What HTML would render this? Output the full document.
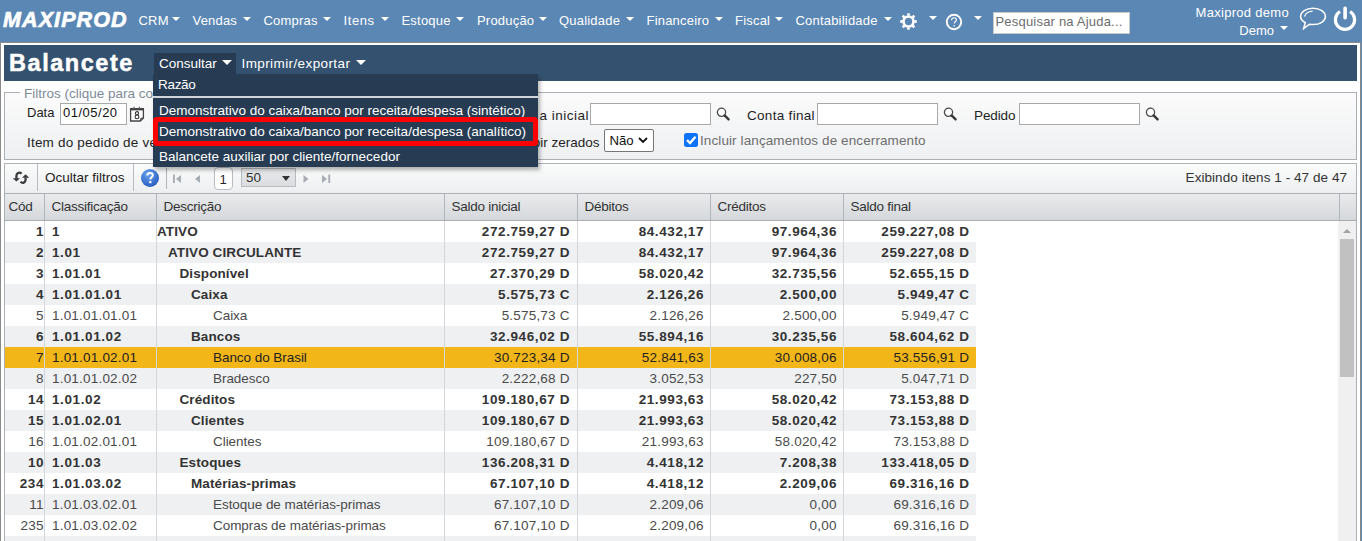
<!DOCTYPE html>
<html><head><meta charset="utf-8"><style>
html,body{margin:0;padding:0;}
body{width:1362px;height:541px;overflow:hidden;position:relative;background:#5b87b4;font-family:"Liberation Sans", sans-serif;}
.t{position:absolute;white-space:nowrap;line-height:16px;font-family:"Liberation Sans", sans-serif;}
.b{position:absolute;}
.tri{position:absolute;width:0;height:0;}
</style></head><body>
<div class="b" style="left:0px;top:0px;width:1362px;height:42px;background:#5b87b4"></div>
<div class="t" style="left:3px;top:11.68px;font-size:21.5px;color:#fff;font-weight:bold;letter-spacing:0px;font-style:italic;letter-spacing:1.1px;-webkit-text-stroke:0.7px #fff">MAXIPROD</div>
<div class="t" style="left:138.5px;top:12.95px;font-size:13px;color:#fff;font-weight:normal;letter-spacing:0.2px;">CRM</div>
<div class="tri" style="left:172px;top:16.5px;border-left:4.5px solid transparent;border-right:4.5px solid transparent;border-top:4.5px solid #fff"></div>
<div class="t" style="left:192.5px;top:12.95px;font-size:13px;color:#fff;font-weight:normal;letter-spacing:0.2px;">Vendas</div>
<div class="tri" style="left:243px;top:16.5px;border-left:4.5px solid transparent;border-right:4.5px solid transparent;border-top:4.5px solid #fff"></div>
<div class="t" style="left:263.5px;top:12.95px;font-size:13px;color:#fff;font-weight:normal;letter-spacing:0.2px;">Compras</div>
<div class="tri" style="left:322.5px;top:16.5px;border-left:4.5px solid transparent;border-right:4.5px solid transparent;border-top:4.5px solid #fff"></div>
<div class="t" style="left:343.5px;top:12.95px;font-size:13px;color:#fff;font-weight:normal;letter-spacing:0.6px;">Itens</div>
<div class="tri" style="left:381px;top:16.5px;border-left:4.5px solid transparent;border-right:4.5px solid transparent;border-top:4.5px solid #fff"></div>
<div class="t" style="left:401.5px;top:12.95px;font-size:13px;color:#fff;font-weight:normal;letter-spacing:0.2px;">Estoque</div>
<div class="tri" style="left:456px;top:16.5px;border-left:4.5px solid transparent;border-right:4.5px solid transparent;border-top:4.5px solid #fff"></div>
<div class="t" style="left:477.0px;top:12.95px;font-size:13px;color:#fff;font-weight:normal;letter-spacing:0.2px;">Produção</div>
<div class="tri" style="left:539px;top:16.5px;border-left:4.5px solid transparent;border-right:4.5px solid transparent;border-top:4.5px solid #fff"></div>
<div class="t" style="left:559.0px;top:12.95px;font-size:13px;color:#fff;font-weight:normal;letter-spacing:0.2px;">Qualidade</div>
<div class="tri" style="left:626px;top:16.5px;border-left:4.5px solid transparent;border-right:4.5px solid transparent;border-top:4.5px solid #fff"></div>
<div class="t" style="left:646.5px;top:12.95px;font-size:13px;color:#fff;font-weight:normal;letter-spacing:0.2px;">Financeiro</div>
<div class="tri" style="left:714.5px;top:16.5px;border-left:4.5px solid transparent;border-right:4.5px solid transparent;border-top:4.5px solid #fff"></div>
<div class="t" style="left:735.0px;top:12.95px;font-size:13px;color:#fff;font-weight:normal;letter-spacing:0.2px;">Fiscal</div>
<div class="tri" style="left:774.5px;top:16.5px;border-left:4.5px solid transparent;border-right:4.5px solid transparent;border-top:4.5px solid #fff"></div>
<div class="t" style="left:795.5px;top:12.95px;font-size:13px;color:#fff;font-weight:normal;letter-spacing:0.2px;">Contabilidade</div>
<div class="tri" style="left:883.5px;top:16.5px;border-left:4.5px solid transparent;border-right:4.5px solid transparent;border-top:4.5px solid #fff"></div>
<svg class="b" style="left:899px;top:12px" width="19" height="19" viewBox="0 0 19 19"><g fill="#fff">
<circle cx="9.5" cy="9.5" r="6.3"/>
<path d="M8.3 1.2 L10.7 1.2 L10.9 3.5 L8.1 3.5 Z M8.1 15.5 L10.9 15.5 L10.7 17.8 L8.3 17.8 Z"/>
<path d="M8.3 1.2 L10.7 1.2 L10.9 3.5 L8.1 3.5 Z M8.1 15.5 L10.9 15.5 L10.7 17.8 L8.3 17.8 Z" transform="rotate(45 9.5 9.5)"/>
<path d="M8.3 1.2 L10.7 1.2 L10.9 3.5 L8.1 3.5 Z M8.1 15.5 L10.9 15.5 L10.7 17.8 L8.3 17.8 Z" transform="rotate(90 9.5 9.5)"/>
<path d="M8.3 1.2 L10.7 1.2 L10.9 3.5 L8.1 3.5 Z M8.1 15.5 L10.9 15.5 L10.7 17.8 L8.3 17.8 Z" transform="rotate(135 9.5 9.5)"/>
</g><circle cx="9.5" cy="9.5" r="3.7" fill="#5b87b4"/></svg>
<div class="tri" style="left:928.5px;top:16px;border-left:4.5px solid transparent;border-right:4.5px solid transparent;border-top:4.5px solid #fff"></div>
<svg class="b" style="left:945px;top:13px" width="18" height="18" viewBox="0 0 18 18">
<circle cx="9" cy="9" r="7.2" fill="none" stroke="#fff" stroke-width="1.9"/>
<path d="M6.6 7.2 C6.6 5.6 7.7 4.8 9 4.8 C10.4 4.8 11.4 5.7 11.4 6.9 C11.4 8.4 9.2 8.7 9.2 10.6" fill="none" stroke="#fff" stroke-width="1.1"/>
<rect x="8.6" y="12.2" width="1.2" height="1.4" fill="#fff"/></svg>
<div class="tri" style="left:974px;top:16px;border-left:4.5px solid transparent;border-right:4.5px solid transparent;border-top:4.5px solid #fff"></div>
<div class="b" style="left:993px;top:12px;width:137px;height:22px;background:#fff;box-sizing:border-box;border:1px solid #c9c9c9"></div>
<div class="t" style="left:995.5px;top:14.05px;font-size:13px;color:#6d6d6d;font-weight:normal;letter-spacing:0.2px;">Pesquisar na Ajuda...</div>
<div class="t" style="right:73px;top:4.95px;font-size:13px;color:#fff;font-weight:normal;letter-spacing:0.3px;">Maxiprod demo</div>
<div class="t" style="right:88px;top:22.95px;font-size:13px;color:#fff;font-weight:normal;letter-spacing:0px;">Demo</div>
<div class="tri" style="left:1280px;top:26px;border-left:4.5px solid transparent;border-right:4.5px solid transparent;border-top:4.5px solid #fff"></div>
<svg class="b" style="left:1299px;top:6px" width="28" height="24" viewBox="0 0 28 24">
<path d="M14 2.2 C21 2.2 26.4 5.9 26.4 10.5 C26.4 15.1 21 18.6 14 18.6 C12.8 18.6 11.6 18.5 10.5 18.2 L4.6 22.6 L6.3 16.6 C3.3 15.1 1.6 12.9 1.6 10.5 C1.6 5.9 7 2.2 14 2.2 Z" fill="none" stroke="#fff" stroke-width="1.5"/>
<path d="M5.6 10.6 C6.2 7.6 9 5.6 13.6 5.1" fill="none" stroke="#fff" stroke-width="1.2"/></svg>
<svg class="b" style="left:1333px;top:6px" width="24" height="26" viewBox="0 0 24 26">
<path d="M7 5.5 A9.6 9.6 0 1 0 17 5.5" fill="none" stroke="#fff" stroke-width="3.2"/>
<rect x="10.3" y="0.6" width="3.6" height="13" rx="1.8" fill="#fff"/></svg>
<div class="b" style="left:0px;top:42px;width:1361px;height:499px;background:#fff;box-sizing:border-box;border:1px solid #8a8a8a;border-bottom:none"></div>
<div class="b" style="left:4px;top:45px;width:1353px;height:36px;background:#34526f"></div>
<div class="t" style="left:9px;top:55.18px;font-size:23.5px;color:#fff;font-weight:bold;letter-spacing:1.55px;-webkit-text-stroke:0.5px #fff">Balancete</div>
<div class="t" style="left:241.5px;top:55.77px;font-size:13.5px;color:#fff;font-weight:normal;letter-spacing:0.4px;">Imprimir/exportar</div>
<div class="tri" style="left:356px;top:60px;border-left:5.0px solid transparent;border-right:5.0px solid transparent;border-top:5px solid #fff"></div>
<div class="b" style="left:4px;top:92px;width:1353px;height:68px;box-sizing:border-box;border:1px solid #aab0b6;background:linear-gradient(#fbfbfb,#eef0f2)"></div>
<div class="b" style="left:20px;top:88px;width:136px;height:8px;background:#fff"></div>
<div class="t" style="left:24px;top:85.98px;font-size:13.5px;color:#7d8b99;font-weight:normal;letter-spacing:0px;background:linear-gradient(#fff 50%,transparent 50%);padding-right:3px">Filtros (clique para consultar)</div>
<div class="t" style="left:27px;top:105.15px;font-size:13px;color:#1f1f1f;font-weight:normal;letter-spacing:0px;">Data</div>
<div class="b" style="left:60px;top:103px;width:67px;height:22px;background:#fff;box-sizing:border-box;border:1px solid #a9a9a9"></div>
<div class="t" style="left:63px;top:104.75px;font-size:13px;color:#111;font-weight:normal;letter-spacing:0.5px;">01/05/20</div>
<svg class="b" style="left:129px;top:106px" width="16" height="17" viewBox="0 0 16 17">
<path d="M1.6 2.6 H14.4 V11.9 L11.3 15 H1.6 Z" fill="#fff" stroke="#454545" stroke-width="1.3"/>
<rect x="1" y="2" width="14" height="2.4" fill="#454545"/>
<rect x="4.4" y="0.8" width="1.3" height="2" fill="#666"/><rect x="9.9" y="0.8" width="1.3" height="2" fill="#666"/>
<path d="M11.3 15 L11.8 12.3 L14.4 11.9 Z" fill="#777" stroke="#454545" stroke-width="0.8"/>
<circle cx="8" cy="7.2" r="1.6" fill="none" stroke="#333" stroke-width="1.1"/>
<circle cx="8" cy="10.9" r="1.9" fill="none" stroke="#333" stroke-width="1.1"/></svg>
<div class="t" style="left:539.5px;top:107.78px;font-size:13.5px;color:#1f1f1f;font-weight:normal;letter-spacing:0.5px;">a inicial</div>
<div class="b" style="left:590px;top:103px;width:121px;height:22px;background:#fff;box-sizing:border-box;border:1px solid #a9a9a9"></div>
<svg class="b" style="left:716px;top:107px" width="16" height="16" viewBox="0 0 16 16">
<circle cx="5.5" cy="5.3" r="4.1" fill="#fff" stroke="#4a4a4a" stroke-width="1.3"/>
<path d="M8.6 8.4 L12.6 12.4" stroke="#3a3a3a" stroke-width="2.4" stroke-linecap="round"/></svg>
<div class="t" style="left:747px;top:107.78px;font-size:13.5px;color:#1f1f1f;font-weight:normal;letter-spacing:0.3px;">Conta final</div>
<div class="b" style="left:817px;top:103px;width:121px;height:22px;background:#fff;box-sizing:border-box;border:1px solid #a9a9a9"></div>
<svg class="b" style="left:943px;top:107px" width="16" height="16" viewBox="0 0 16 16">
<circle cx="5.5" cy="5.3" r="4.1" fill="#fff" stroke="#4a4a4a" stroke-width="1.3"/>
<path d="M8.6 8.4 L12.6 12.4" stroke="#3a3a3a" stroke-width="2.4" stroke-linecap="round"/></svg>
<div class="t" style="left:974px;top:107.78px;font-size:13.5px;color:#1f1f1f;font-weight:normal;letter-spacing:-0.1px;">Pedido</div>
<div class="b" style="left:1019px;top:103px;width:121px;height:22px;background:#fff;box-sizing:border-box;border:1px solid #a9a9a9"></div>
<svg class="b" style="left:1145px;top:107px" width="16" height="16" viewBox="0 0 16 16">
<circle cx="5.5" cy="5.3" r="4.1" fill="#fff" stroke="#4a4a4a" stroke-width="1.3"/>
<path d="M8.6 8.4 L12.6 12.4" stroke="#3a3a3a" stroke-width="2.4" stroke-linecap="round"/></svg>
<div class="t" style="left:27px;top:134.68px;font-size:13.5px;color:#1f1f1f;font-weight:normal;letter-spacing:0.2px;">Item do pedido de venda</div>
<div class="t" style="left:514px;top:134.68px;font-size:13.5px;color:#1f1f1f;font-weight:normal;letter-spacing:0px;">Exibir zerados</div>
<div class="b" style="left:604px;top:129px;width:50px;height:23px;background:#fff;box-sizing:border-box;border:1px solid #767676;border-radius:2px"></div>
<div class="t" style="left:609.5px;top:133.38px;font-size:13.2px;color:#111;font-weight:normal;letter-spacing:0px;">Não</div>
<svg class="b" style="left:638px;top:137px" width="10" height="7" viewBox="0 0 10 7"><path d="M1 1 L5 5 L9 1" fill="none" stroke="#111" stroke-width="1.8"/></svg>
<div class="b" style="left:684px;top:133px;width:14px;height:14px;background:#0d72f7;border-radius:2.5px"></div>
<svg class="b" style="left:684px;top:133px" width="14" height="14" viewBox="0 0 14 14"><path d="M3 7 L6 10 L11.5 3.8" fill="none" stroke="#fff" stroke-width="2.4"/></svg>
<div class="t" style="left:700px;top:133.28px;font-size:13.5px;color:#6e6e6e;font-weight:normal;letter-spacing:0.1px;">Incluir lançamentos de encerramento</div>
<div class="b" style="left:4px;top:163px;width:1353px;height:31px;box-sizing:border-box;border:1px solid #aeb3b8;border-bottom:none;background:linear-gradient(#fbfbfb,#eceef0)"></div>
<div class="b" style="left:37px;top:164px;width:1px;height:27px;background:#b8bcc0"></div>
<div class="b" style="left:133px;top:164px;width:1px;height:27px;background:#b8bcc0"></div>
<div class="b" style="left:166px;top:168px;width:1px;height:21px;background:#b0b5ba"></div>
<svg class="b" style="left:8px;top:166px" width="26" height="24" viewBox="0 0 26 24">
<path d="M13.6 7.6 C11 5.6 8.4 7 8.4 10 L8.4 12.8" fill="none" stroke="#3a3a3a" stroke-width="2.3"/>
<path d="M4.8 12.2 L12.1 12.2 L8.4 15.6 Z" fill="#3a3a3a"/>
<path d="M14 11.8 L21.2 11.8 L17.6 8.3 Z" fill="#3a3a3a"/>
<path d="M17.6 11.5 L17.6 13.5 C17.6 16.8 14.8 17.6 12.4 15.9" fill="none" stroke="#3a3a3a" stroke-width="2.3"/></svg>
<div class="t" style="left:45px;top:169.78px;font-size:13.5px;color:#222;font-weight:normal;letter-spacing:0px;">Ocultar filtros</div>
<svg class="b" style="left:140px;top:168px" width="20" height="20" viewBox="0 0 20 20">
<defs><radialGradient id="hg" cx="40%" cy="30%" r="70%"><stop offset="0" stop-color="#6aa2f0"/><stop offset="1" stop-color="#2a5fc0"/></radialGradient></defs>
<circle cx="10" cy="10" r="9" fill="url(#hg)"/>
<path d="M7.2 7.6 C7.2 5.8 8.4 5 10 5 C11.7 5 12.8 6 12.8 7.3 C12.8 9.2 10.3 9.3 10.3 11.6" fill="none" stroke="#fff" stroke-width="2"/>
<rect x="9.2" y="13" width="2.2" height="2.2" fill="#fff"/></svg>
<svg class="b" style="left:172px;top:174px" width="160" height="10" viewBox="0 0 160 10" fill="#a9aeb4">
<rect x="1" y="0.5" width="1.9" height="8.5"/><path d="M9 1 L4 5 L9 9 Z"/>
<path d="M28 1 L23 5 L28 9 Z"/>
<path d="M131.5 1 L136.5 5 L131.5 9 Z"/>
<path d="M150 1 L155 5 L150 9 Z"/><rect x="156.3" y="0.5" width="1.9" height="8.5"/></svg>
<div class="b" style="left:214px;top:167px;width:19px;height:23px;box-sizing:border-box;border:1px solid #b9bdc1;border-radius:4px;background:#fff"></div>
<div class="t" style="left:219.5px;top:171.75px;font-size:13px;color:#222;font-weight:normal;letter-spacing:0px;">1</div>
<div class="b" style="left:241px;top:168px;width:55px;height:19px;box-sizing:border-box;border:1px solid #b9bdc1;background:linear-gradient(#e9eaec,#dadcdf)"></div>
<div class="t" style="left:246px;top:170.28px;font-size:13.5px;color:#333;font-weight:normal;letter-spacing:0px;">50</div>
<div class="tri" style="left:281.5px;top:176px;border-left:4.5px solid transparent;border-right:4.5px solid transparent;border-top:5px solid #333"></div>
<div class="t" style="right:15px;top:169.78px;font-size:13.5px;color:#333;font-weight:normal;letter-spacing:0.06px;margin-right:-0.06px">Exibindo itens 1 - 47 de 47</div>
<div class="b" style="left:4px;top:193px;width:1353px;height:348px;box-sizing:border-box;border:1px solid #aab0b6;border-bottom:none;background:#fff"></div>
<div class="b" style="left:5px;top:194px;width:1351px;height:26px;background:linear-gradient(#e9eaec,#d5d8db);border-bottom:1px solid #a9aeb3"></div>
<div class="b" style="left:44px;top:194px;width:1px;height:26px;background:#b0b5ba"></div>
<div class="b" style="left:156px;top:194px;width:1px;height:26px;background:#b0b5ba"></div>
<div class="b" style="left:444px;top:194px;width:1px;height:26px;background:#b0b5ba"></div>
<div class="b" style="left:577px;top:194px;width:1px;height:26px;background:#b0b5ba"></div>
<div class="b" style="left:710px;top:194px;width:1px;height:26px;background:#b0b5ba"></div>
<div class="b" style="left:843px;top:194px;width:1px;height:26px;background:#b0b5ba"></div>
<div class="b" style="left:1339px;top:194px;width:1px;height:26px;background:#b0b5ba"></div>
<div class="t" style="left:8.5px;top:198.78px;font-size:13.5px;color:#333;font-weight:normal;letter-spacing:-0.25px;">Cód</div>
<div class="t" style="left:51.5px;top:198.78px;font-size:13.5px;color:#333;font-weight:normal;letter-spacing:-0.25px;">Classificação</div>
<div class="t" style="left:163.5px;top:198.78px;font-size:13.5px;color:#333;font-weight:normal;letter-spacing:-0.25px;">Descrição</div>
<div class="t" style="left:451.5px;top:198.78px;font-size:13.5px;color:#333;font-weight:normal;letter-spacing:-0.25px;">Saldo inicial</div>
<div class="t" style="left:584.5px;top:198.78px;font-size:13.5px;color:#333;font-weight:normal;letter-spacing:-0.25px;">Débitos</div>
<div class="t" style="left:717.5px;top:198.78px;font-size:13.5px;color:#333;font-weight:normal;letter-spacing:-0.25px;">Créditos</div>
<div class="t" style="left:850.5px;top:198.78px;font-size:13.5px;color:#333;font-weight:normal;letter-spacing:-0.25px;">Saldo final</div>
<div class="b" style="left:5px;top:221px;width:971px;height:21px;background:#fff"></div>
<div class="t" style="right:1318.5px;top:224.08px;font-size:13.5px;color:#333;font-weight:bold;letter-spacing:0.6px;margin-right:-0.6px">1</div>
<div class="t" style="left:52px;top:224.08px;font-size:13.5px;color:#333;font-weight:bold;letter-spacing:0.6px;">1</div>
<div class="t" style="left:157px;top:224.08px;font-size:13.5px;color:#333;font-weight:bold;letter-spacing:0.1px;">ATIVO</div>
<div class="t" style="right:792.5px;top:224.08px;font-size:13.5px;color:#333;font-weight:bold;letter-spacing:0.6px;margin-right:-0.6px">272.759,27 D</div>
<div class="t" style="right:658.5px;top:224.08px;font-size:13.5px;color:#333;font-weight:bold;letter-spacing:0.6px;margin-right:-0.6px">84.432,17</div>
<div class="t" style="right:525.5px;top:224.08px;font-size:13.5px;color:#333;font-weight:bold;letter-spacing:0.6px;margin-right:-0.6px">97.964,36</div>
<div class="t" style="right:393px;top:224.08px;font-size:13.5px;color:#333;font-weight:bold;letter-spacing:0.6px;margin-right:-0.6px">259.227,08 D</div>
<div class="b" style="left:5px;top:242px;width:971px;height:21px;background:#eff0f2"></div>
<div class="t" style="right:1318.5px;top:245.08px;font-size:13.5px;color:#333;font-weight:bold;letter-spacing:0.6px;margin-right:-0.6px">2</div>
<div class="t" style="left:52px;top:245.08px;font-size:13.5px;color:#333;font-weight:bold;letter-spacing:0.6px;">1.01</div>
<div class="t" style="left:168px;top:245.08px;font-size:13.5px;color:#333;font-weight:bold;letter-spacing:0.1px;">ATIVO CIRCULANTE</div>
<div class="t" style="right:792.5px;top:245.08px;font-size:13.5px;color:#333;font-weight:bold;letter-spacing:0.6px;margin-right:-0.6px">272.759,27 D</div>
<div class="t" style="right:658.5px;top:245.08px;font-size:13.5px;color:#333;font-weight:bold;letter-spacing:0.6px;margin-right:-0.6px">84.432,17</div>
<div class="t" style="right:525.5px;top:245.08px;font-size:13.5px;color:#333;font-weight:bold;letter-spacing:0.6px;margin-right:-0.6px">97.964,36</div>
<div class="t" style="right:393px;top:245.08px;font-size:13.5px;color:#333;font-weight:bold;letter-spacing:0.6px;margin-right:-0.6px">259.227,08 D</div>
<div class="b" style="left:5px;top:263px;width:971px;height:21px;background:#fff"></div>
<div class="t" style="right:1318.5px;top:266.07px;font-size:13.5px;color:#333;font-weight:bold;letter-spacing:0.6px;margin-right:-0.6px">3</div>
<div class="t" style="left:52px;top:266.07px;font-size:13.5px;color:#333;font-weight:bold;letter-spacing:0.6px;">1.01.01</div>
<div class="t" style="left:179.5px;top:266.07px;font-size:13.5px;color:#333;font-weight:bold;letter-spacing:0.1px;">Disponível</div>
<div class="t" style="right:792.5px;top:266.07px;font-size:13.5px;color:#333;font-weight:bold;letter-spacing:0.6px;margin-right:-0.6px">27.370,29 D</div>
<div class="t" style="right:658.5px;top:266.07px;font-size:13.5px;color:#333;font-weight:bold;letter-spacing:0.6px;margin-right:-0.6px">58.020,42</div>
<div class="t" style="right:525.5px;top:266.07px;font-size:13.5px;color:#333;font-weight:bold;letter-spacing:0.6px;margin-right:-0.6px">32.735,56</div>
<div class="t" style="right:393px;top:266.07px;font-size:13.5px;color:#333;font-weight:bold;letter-spacing:0.6px;margin-right:-0.6px">52.655,15 D</div>
<div class="b" style="left:5px;top:284px;width:971px;height:21px;background:#eff0f2"></div>
<div class="t" style="right:1318.5px;top:287.07px;font-size:13.5px;color:#333;font-weight:bold;letter-spacing:0.6px;margin-right:-0.6px">4</div>
<div class="t" style="left:52px;top:287.07px;font-size:13.5px;color:#333;font-weight:bold;letter-spacing:0.6px;">1.01.01.01</div>
<div class="t" style="left:191px;top:287.07px;font-size:13.5px;color:#333;font-weight:bold;letter-spacing:0.1px;">Caixa</div>
<div class="t" style="right:792.5px;top:287.07px;font-size:13.5px;color:#333;font-weight:bold;letter-spacing:0.6px;margin-right:-0.6px">5.575,73 C</div>
<div class="t" style="right:658.5px;top:287.07px;font-size:13.5px;color:#333;font-weight:bold;letter-spacing:0.6px;margin-right:-0.6px">2.126,26</div>
<div class="t" style="right:525.5px;top:287.07px;font-size:13.5px;color:#333;font-weight:bold;letter-spacing:0.6px;margin-right:-0.6px">2.500,00</div>
<div class="t" style="right:393px;top:287.07px;font-size:13.5px;color:#333;font-weight:bold;letter-spacing:0.6px;margin-right:-0.6px">5.949,47 C</div>
<div class="b" style="left:5px;top:305px;width:971px;height:21px;background:#fff"></div>
<div class="t" style="right:1318.5px;top:308.07px;font-size:13.5px;color:#4a4a4a;font-weight:normal;letter-spacing:0.2px;margin-right:-0.2px">5</div>
<div class="t" style="left:52px;top:308.07px;font-size:13.5px;color:#4a4a4a;font-weight:normal;letter-spacing:0.2px;">1.01.01.01.01</div>
<div class="t" style="left:213px;top:308.07px;font-size:13.5px;color:#4a4a4a;font-weight:normal;letter-spacing:-0.05px;">Caixa</div>
<div class="t" style="right:792.5px;top:308.07px;font-size:13.5px;color:#4a4a4a;font-weight:normal;letter-spacing:0.2px;margin-right:-0.2px">5.575,73 C</div>
<div class="t" style="right:658.5px;top:308.07px;font-size:13.5px;color:#4a4a4a;font-weight:normal;letter-spacing:0.2px;margin-right:-0.2px">2.126,26</div>
<div class="t" style="right:525.5px;top:308.07px;font-size:13.5px;color:#4a4a4a;font-weight:normal;letter-spacing:0.2px;margin-right:-0.2px">2.500,00</div>
<div class="t" style="right:393px;top:308.07px;font-size:13.5px;color:#4a4a4a;font-weight:normal;letter-spacing:0.2px;margin-right:-0.2px">5.949,47 C</div>
<div class="b" style="left:5px;top:326px;width:971px;height:21px;background:#eff0f2"></div>
<div class="t" style="right:1318.5px;top:329.07px;font-size:13.5px;color:#333;font-weight:bold;letter-spacing:0.6px;margin-right:-0.6px">6</div>
<div class="t" style="left:52px;top:329.07px;font-size:13.5px;color:#333;font-weight:bold;letter-spacing:0.6px;">1.01.01.02</div>
<div class="t" style="left:191px;top:329.07px;font-size:13.5px;color:#333;font-weight:bold;letter-spacing:0.1px;">Bancos</div>
<div class="t" style="right:792.5px;top:329.07px;font-size:13.5px;color:#333;font-weight:bold;letter-spacing:0.6px;margin-right:-0.6px">32.946,02 D</div>
<div class="t" style="right:658.5px;top:329.07px;font-size:13.5px;color:#333;font-weight:bold;letter-spacing:0.6px;margin-right:-0.6px">55.894,16</div>
<div class="t" style="right:525.5px;top:329.07px;font-size:13.5px;color:#333;font-weight:bold;letter-spacing:0.6px;margin-right:-0.6px">30.235,56</div>
<div class="t" style="right:393px;top:329.07px;font-size:13.5px;color:#333;font-weight:bold;letter-spacing:0.6px;margin-right:-0.6px">58.604,62 D</div>
<div class="b" style="left:5px;top:347px;width:971px;height:21px;background:#f2b619"></div>
<div class="t" style="right:1318.5px;top:350.07px;font-size:13.5px;color:#222;font-weight:normal;letter-spacing:0.2px;margin-right:-0.2px">7</div>
<div class="t" style="left:52px;top:350.07px;font-size:13.5px;color:#222;font-weight:normal;letter-spacing:0.2px;">1.01.01.02.01</div>
<div class="t" style="left:213px;top:350.07px;font-size:13.5px;color:#222;font-weight:normal;letter-spacing:-0.05px;">Banco do Brasil</div>
<div class="t" style="right:792.5px;top:350.07px;font-size:13.5px;color:#222;font-weight:normal;letter-spacing:0.2px;margin-right:-0.2px">30.723,34 D</div>
<div class="t" style="right:658.5px;top:350.07px;font-size:13.5px;color:#222;font-weight:normal;letter-spacing:0.2px;margin-right:-0.2px">52.841,63</div>
<div class="t" style="right:525.5px;top:350.07px;font-size:13.5px;color:#222;font-weight:normal;letter-spacing:0.2px;margin-right:-0.2px">30.008,06</div>
<div class="t" style="right:393px;top:350.07px;font-size:13.5px;color:#222;font-weight:normal;letter-spacing:0.2px;margin-right:-0.2px">53.556,91 D</div>
<div class="b" style="left:5px;top:368px;width:971px;height:21px;background:#eff0f2"></div>
<div class="t" style="right:1318.5px;top:371.07px;font-size:13.5px;color:#4a4a4a;font-weight:normal;letter-spacing:0.2px;margin-right:-0.2px">8</div>
<div class="t" style="left:52px;top:371.07px;font-size:13.5px;color:#4a4a4a;font-weight:normal;letter-spacing:0.2px;">1.01.01.02.02</div>
<div class="t" style="left:213px;top:371.07px;font-size:13.5px;color:#4a4a4a;font-weight:normal;letter-spacing:-0.05px;">Bradesco</div>
<div class="t" style="right:792.5px;top:371.07px;font-size:13.5px;color:#4a4a4a;font-weight:normal;letter-spacing:0.2px;margin-right:-0.2px">2.222,68 D</div>
<div class="t" style="right:658.5px;top:371.07px;font-size:13.5px;color:#4a4a4a;font-weight:normal;letter-spacing:0.2px;margin-right:-0.2px">3.052,53</div>
<div class="t" style="right:525.5px;top:371.07px;font-size:13.5px;color:#4a4a4a;font-weight:normal;letter-spacing:0.2px;margin-right:-0.2px">227,50</div>
<div class="t" style="right:393px;top:371.07px;font-size:13.5px;color:#4a4a4a;font-weight:normal;letter-spacing:0.2px;margin-right:-0.2px">5.047,71 D</div>
<div class="b" style="left:5px;top:389px;width:971px;height:21px;background:#fff"></div>
<div class="t" style="right:1318.5px;top:392.07px;font-size:13.5px;color:#333;font-weight:bold;letter-spacing:0.6px;margin-right:-0.6px">14</div>
<div class="t" style="left:52px;top:392.07px;font-size:13.5px;color:#333;font-weight:bold;letter-spacing:0.6px;">1.01.02</div>
<div class="t" style="left:179.5px;top:392.07px;font-size:13.5px;color:#333;font-weight:bold;letter-spacing:0.1px;">Créditos</div>
<div class="t" style="right:792.5px;top:392.07px;font-size:13.5px;color:#333;font-weight:bold;letter-spacing:0.6px;margin-right:-0.6px">109.180,67 D</div>
<div class="t" style="right:658.5px;top:392.07px;font-size:13.5px;color:#333;font-weight:bold;letter-spacing:0.6px;margin-right:-0.6px">21.993,63</div>
<div class="t" style="right:525.5px;top:392.07px;font-size:13.5px;color:#333;font-weight:bold;letter-spacing:0.6px;margin-right:-0.6px">58.020,42</div>
<div class="t" style="right:393px;top:392.07px;font-size:13.5px;color:#333;font-weight:bold;letter-spacing:0.6px;margin-right:-0.6px">73.153,88 D</div>
<div class="b" style="left:5px;top:410px;width:971px;height:21px;background:#eff0f2"></div>
<div class="t" style="right:1318.5px;top:413.07px;font-size:13.5px;color:#333;font-weight:bold;letter-spacing:0.6px;margin-right:-0.6px">15</div>
<div class="t" style="left:52px;top:413.07px;font-size:13.5px;color:#333;font-weight:bold;letter-spacing:0.6px;">1.01.02.01</div>
<div class="t" style="left:191px;top:413.07px;font-size:13.5px;color:#333;font-weight:bold;letter-spacing:0.1px;">Clientes</div>
<div class="t" style="right:792.5px;top:413.07px;font-size:13.5px;color:#333;font-weight:bold;letter-spacing:0.6px;margin-right:-0.6px">109.180,67 D</div>
<div class="t" style="right:658.5px;top:413.07px;font-size:13.5px;color:#333;font-weight:bold;letter-spacing:0.6px;margin-right:-0.6px">21.993,63</div>
<div class="t" style="right:525.5px;top:413.07px;font-size:13.5px;color:#333;font-weight:bold;letter-spacing:0.6px;margin-right:-0.6px">58.020,42</div>
<div class="t" style="right:393px;top:413.07px;font-size:13.5px;color:#333;font-weight:bold;letter-spacing:0.6px;margin-right:-0.6px">73.153,88 D</div>
<div class="b" style="left:5px;top:431px;width:971px;height:21px;background:#fff"></div>
<div class="t" style="right:1318.5px;top:434.07px;font-size:13.5px;color:#4a4a4a;font-weight:normal;letter-spacing:0.2px;margin-right:-0.2px">16</div>
<div class="t" style="left:52px;top:434.07px;font-size:13.5px;color:#4a4a4a;font-weight:normal;letter-spacing:0.2px;">1.01.02.01.01</div>
<div class="t" style="left:213px;top:434.07px;font-size:13.5px;color:#4a4a4a;font-weight:normal;letter-spacing:-0.05px;">Clientes</div>
<div class="t" style="right:792.5px;top:434.07px;font-size:13.5px;color:#4a4a4a;font-weight:normal;letter-spacing:0.2px;margin-right:-0.2px">109.180,67 D</div>
<div class="t" style="right:658.5px;top:434.07px;font-size:13.5px;color:#4a4a4a;font-weight:normal;letter-spacing:0.2px;margin-right:-0.2px">21.993,63</div>
<div class="t" style="right:525.5px;top:434.07px;font-size:13.5px;color:#4a4a4a;font-weight:normal;letter-spacing:0.2px;margin-right:-0.2px">58.020,42</div>
<div class="t" style="right:393px;top:434.07px;font-size:13.5px;color:#4a4a4a;font-weight:normal;letter-spacing:0.2px;margin-right:-0.2px">73.153,88 D</div>
<div class="b" style="left:5px;top:452px;width:971px;height:21px;background:#eff0f2"></div>
<div class="t" style="right:1318.5px;top:455.07px;font-size:13.5px;color:#333;font-weight:bold;letter-spacing:0.6px;margin-right:-0.6px">10</div>
<div class="t" style="left:52px;top:455.07px;font-size:13.5px;color:#333;font-weight:bold;letter-spacing:0.6px;">1.01.03</div>
<div class="t" style="left:179.5px;top:455.07px;font-size:13.5px;color:#333;font-weight:bold;letter-spacing:0.1px;">Estoques</div>
<div class="t" style="right:792.5px;top:455.07px;font-size:13.5px;color:#333;font-weight:bold;letter-spacing:0.6px;margin-right:-0.6px">136.208,31 D</div>
<div class="t" style="right:658.5px;top:455.07px;font-size:13.5px;color:#333;font-weight:bold;letter-spacing:0.6px;margin-right:-0.6px">4.418,12</div>
<div class="t" style="right:525.5px;top:455.07px;font-size:13.5px;color:#333;font-weight:bold;letter-spacing:0.6px;margin-right:-0.6px">7.208,38</div>
<div class="t" style="right:393px;top:455.07px;font-size:13.5px;color:#333;font-weight:bold;letter-spacing:0.6px;margin-right:-0.6px">133.418,05 D</div>
<div class="b" style="left:5px;top:473px;width:971px;height:21px;background:#fff"></div>
<div class="t" style="right:1318.5px;top:476.07px;font-size:13.5px;color:#333;font-weight:bold;letter-spacing:0.6px;margin-right:-0.6px">234</div>
<div class="t" style="left:52px;top:476.07px;font-size:13.5px;color:#333;font-weight:bold;letter-spacing:0.6px;">1.01.03.02</div>
<div class="t" style="left:191px;top:476.07px;font-size:13.5px;color:#333;font-weight:bold;letter-spacing:0.1px;">Matérias-primas</div>
<div class="t" style="right:792.5px;top:476.07px;font-size:13.5px;color:#333;font-weight:bold;letter-spacing:0.6px;margin-right:-0.6px">67.107,10 D</div>
<div class="t" style="right:658.5px;top:476.07px;font-size:13.5px;color:#333;font-weight:bold;letter-spacing:0.6px;margin-right:-0.6px">4.418,12</div>
<div class="t" style="right:525.5px;top:476.07px;font-size:13.5px;color:#333;font-weight:bold;letter-spacing:0.6px;margin-right:-0.6px">2.209,06</div>
<div class="t" style="right:393px;top:476.07px;font-size:13.5px;color:#333;font-weight:bold;letter-spacing:0.6px;margin-right:-0.6px">69.316,16 D</div>
<div class="b" style="left:5px;top:494px;width:971px;height:21px;background:#eff0f2"></div>
<div class="t" style="right:1318.5px;top:497.07px;font-size:13.5px;color:#4a4a4a;font-weight:normal;letter-spacing:0.2px;margin-right:-0.2px">11</div>
<div class="t" style="left:52px;top:497.07px;font-size:13.5px;color:#4a4a4a;font-weight:normal;letter-spacing:0.2px;">1.01.03.02.01</div>
<div class="t" style="left:213px;top:497.07px;font-size:13.5px;color:#4a4a4a;font-weight:normal;letter-spacing:-0.05px;">Estoque de matérias-primas</div>
<div class="t" style="right:792.5px;top:497.07px;font-size:13.5px;color:#4a4a4a;font-weight:normal;letter-spacing:0.2px;margin-right:-0.2px">67.107,10 D</div>
<div class="t" style="right:658.5px;top:497.07px;font-size:13.5px;color:#4a4a4a;font-weight:normal;letter-spacing:0.2px;margin-right:-0.2px">2.209,06</div>
<div class="t" style="right:525.5px;top:497.07px;font-size:13.5px;color:#4a4a4a;font-weight:normal;letter-spacing:0.2px;margin-right:-0.2px">0,00</div>
<div class="t" style="right:393px;top:497.07px;font-size:13.5px;color:#4a4a4a;font-weight:normal;letter-spacing:0.2px;margin-right:-0.2px">69.316,16 D</div>
<div class="b" style="left:5px;top:515px;width:971px;height:21px;background:#fff"></div>
<div class="t" style="right:1318.5px;top:518.07px;font-size:13.5px;color:#4a4a4a;font-weight:normal;letter-spacing:0.2px;margin-right:-0.2px">235</div>
<div class="t" style="left:52px;top:518.07px;font-size:13.5px;color:#4a4a4a;font-weight:normal;letter-spacing:0.2px;">1.01.03.02.02</div>
<div class="t" style="left:213px;top:518.07px;font-size:13.5px;color:#4a4a4a;font-weight:normal;letter-spacing:-0.05px;">Compras de matérias-primas</div>
<div class="t" style="right:792.5px;top:518.07px;font-size:13.5px;color:#4a4a4a;font-weight:normal;letter-spacing:0.2px;margin-right:-0.2px">67.107,10 D</div>
<div class="t" style="right:658.5px;top:518.07px;font-size:13.5px;color:#4a4a4a;font-weight:normal;letter-spacing:0.2px;margin-right:-0.2px">2.209,06</div>
<div class="t" style="right:525.5px;top:518.07px;font-size:13.5px;color:#4a4a4a;font-weight:normal;letter-spacing:0.2px;margin-right:-0.2px">0,00</div>
<div class="t" style="right:393px;top:518.07px;font-size:13.5px;color:#4a4a4a;font-weight:normal;letter-spacing:0.2px;margin-right:-0.2px">69.316,16 D</div>
<div class="b" style="left:5px;top:536px;width:971px;height:10px;background:#eff0f2"></div>
<div class="b" style="left:44px;top:221px;width:1px;height:330px;background:#d3d6da"></div>
<div class="b" style="left:156px;top:221px;width:1px;height:330px;background:#d3d6da"></div>
<div class="b" style="left:444px;top:221px;width:1px;height:330px;background:#d3d6da"></div>
<div class="b" style="left:577px;top:221px;width:1px;height:330px;background:#d3d6da"></div>
<div class="b" style="left:710px;top:221px;width:1px;height:330px;background:#d3d6da"></div>
<div class="b" style="left:843px;top:221px;width:1px;height:330px;background:#d3d6da"></div>
<div class="b" style="left:1338px;top:221px;width:18px;height:330px;background:#f0f0f0"></div>
<div class="tri" style="left:1342.5px;top:228.5px;border-left:4.5px solid transparent;border-right:4.5px solid transparent;border-bottom:4.5px solid #a3a3a3"></div>
<div class="b" style="left:1340px;top:239px;width:14px;height:138px;background:#c1c1c1"></div>
<div class="b" style="left:154px;top:53px;width:82px;height:21px;background:#273c53"></div>
<div class="t" style="left:159px;top:55.77px;font-size:13.5px;color:#fff;font-weight:normal;letter-spacing:0px;">Consultar</div>
<div class="tri" style="left:222px;top:60px;border-left:5.0px solid transparent;border-right:5.0px solid transparent;border-top:5px solid #fff"></div>
<div class="b" style="left:153px;top:74px;width:385px;height:93px;background:#273c53;box-shadow:2px 3px 4px rgba(0,0,0,0.3)"></div>
<div class="b" style="left:153px;top:96px;width:385px;height:2px;background:#d1d6da"></div>
<div class="t" style="left:158px;top:77.18px;font-size:13.5px;color:#fff;font-weight:normal;letter-spacing:-0.3px;">Razão</div>
<div class="t" style="left:159px;top:102.88px;font-size:13.5px;color:#fff;font-weight:normal;letter-spacing:0px;">Demonstrativo do caixa/banco por receita/despesa (sintético)</div>
<div class="t" style="left:159px;top:123.88px;font-size:13.5px;color:#fff;font-weight:normal;letter-spacing:0px;">Demonstrativo do caixa/banco por receita/despesa (analítico)</div>
<div class="t" style="left:159px;top:148.88px;font-size:13.5px;color:#fff;font-weight:normal;letter-spacing:0px;">Balancete auxiliar por cliente/fornecedor</div>
<div class="b" style="left:153px;top:117px;width:385px;height:29px;box-sizing:border-box;border:5px solid #ff0000;border-radius:4px"></div>
</body></html>
